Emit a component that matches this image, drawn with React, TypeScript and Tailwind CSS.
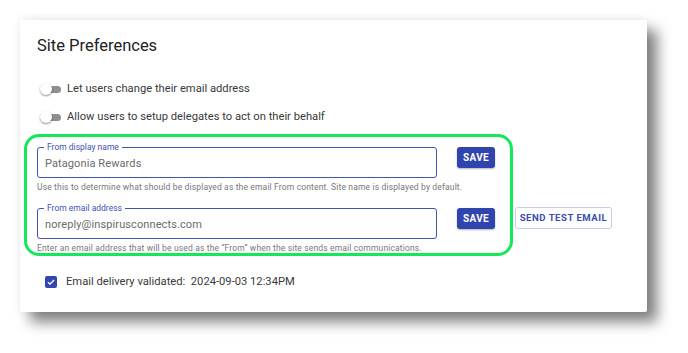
import React from "react";

const Toggle = () => (
  <div className="relative w-[21px] h-[12px] shrink-0">
    <div className="absolute left-[4px] right-0 top-[3px] h-[7px] rounded-full bg-[#8f8f8f]" />
    <div className="absolute left-0 top-0 w-[12px] h-[12px] rounded-full bg-white shadow-[0_1px_2px_rgba(0,0,0,0.45)]" />
  </div>
);

const Field = ({ label, value }: { label: string; value: string }) => (
  <div className="relative w-[400px] h-[31px] rounded-[3px] border-[1.5px] border-[#4152b8] flex items-center px-[7px] pt-[3px]">
    <span className="absolute -top-[7px] left-[6px] bg-white px-[3px] text-[8.5px] leading-[12px] text-[#3f51b5]">
      {label}
    </span>
    <span className="text-[11px] text-[#6b6b6b] tracking-[0.1px]">{value}</span>
  </div>
);

const SaveButton = () => (
  <button className="w-[38px] h-[21px] rounded-[3px] bg-[#2f45ad] text-white text-[10px] font-bold tracking-[0.4px] shadow-[0_1px_2px_rgba(0,0,0,0.3)]">
    SAVE
  </button>
);

export default function App() {
  return (
    <div className="w-[688px] h-[353px] bg-white pt-[20px] pl-[20px] font-['Roboto',sans-serif]">
      <div className="relative w-[627px] h-[292px] bg-white rounded-[2px] shadow-[10px_10px_14px_rgba(0,0,0,0.5),0_-2px_8px_rgba(0,0,0,0.06)] pl-[17px] pt-[16px]">
        <h1 className="text-[16.5px] leading-[20px] text-[#222]">Site Preferences</h1>

        <div className="mt-[27px] flex flex-col gap-[16px] pl-[3px]">
          <div className="flex items-center gap-[6px] h-[12px]">
            <Toggle />
            <span className="text-[11.2px] text-[#3a3a3a]">Let users change their email address</span>
          </div>
          <div className="flex items-center gap-[6px] h-[12px]">
            <Toggle />
            <span className="text-[11.2px] text-[#3a3a3a]">Allow users to setup delegates to act on their behalf</span>
          </div>
        </div>

        <div className="mt-[24px] flex flex-col">
          <div className="flex items-start gap-[20px]">
            <Field label="From display name" value="Patagonia Rewards" />
            <SaveButton />
          </div>
          <p className="mt-[4px] text-[8.5px] leading-[11px] text-[#777] tracking-[0.15px]">
            Use this to determine what should be displayed as the email From content. Site name is displayed by default.
          </p>

          <div className="mt-[15px] flex items-start gap-[20px]">
            <Field label="From email address" value="noreply@inspirusconnects.com" />
            <SaveButton />
            <button className="-mt-[1px] w-[97px] h-[22px] rounded-[3px] border border-[#c5cbe8] text-[#3a4db0] text-[9.6px] font-bold tracking-[0.5px]">
              SEND TEST EMAIL
            </button>
          </div>
          <p className="mt-[4px] text-[8.5px] leading-[11px] text-[#777] tracking-[0.15px]">
            Enter an email address that will be used as the “From” when the site sends email communications.
          </p>
        </div>

        <div className="mt-[20px] ml-[8px] flex items-center gap-[9px]">
          <div className="w-[12px] h-[12px] rounded-[2px] bg-[#3347b0] flex items-center justify-center">
            <svg viewBox="0 0 12 12" className="w-[10px] h-[10px]">
              <path d="M2.3 6.2 L4.8 8.6 L9.7 3.6" fill="none" stroke="white" strokeWidth="1.6" />
            </svg>
          </div>
          <span className="text-[11.2px] text-[#3a3a3a]">Email delivery validated:&nbsp; 2024-09-03 12:34PM</span>
        </div>

        <div className="absolute left-[4px] top-[114px] w-[489px] h-[122px] rounded-[15px] border-[3px] border-[#12e85a] pointer-events-none" />
      </div>
    </div>
  );
}
